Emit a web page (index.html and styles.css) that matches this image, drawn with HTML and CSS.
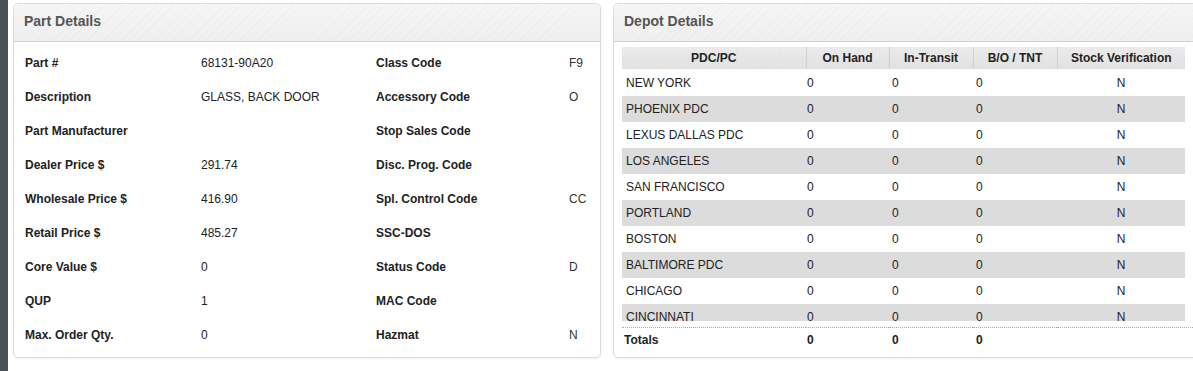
FILE: index.html
```html
<!DOCTYPE html>
<html>
<head>
<meta charset="utf-8">
<link rel="stylesheet" href="styles.css">
</head>
<body>
<div class="page">
  <div class="strip"></div>
  <section class="panel part">
    <div class="panel-head">Part Details</div>
    <div class="part-grid">
      <div class="lbl">Part #</div><div class="val">68131-90A20</div><div class="lbl">Class Code</div><div class="val r">F9</div>
      <div class="lbl">Description</div><div class="val">GLASS, BACK DOOR</div><div class="lbl">Accessory Code</div><div class="val r">O</div>
      <div class="lbl">Part Manufacturer</div><div class="val"></div><div class="lbl">Stop Sales Code</div><div class="val r"></div>
      <div class="lbl">Dealer Price $</div><div class="val">291.74</div><div class="lbl">Disc. Prog. Code</div><div class="val r"></div>
      <div class="lbl">Wholesale Price $</div><div class="val">416.90</div><div class="lbl">Spl. Control Code</div><div class="val r">CC</div>
      <div class="lbl">Retail Price $</div><div class="val">485.27</div><div class="lbl">SSC-DOS</div><div class="val r"></div>
      <div class="lbl">Core Value $</div><div class="val">0</div><div class="lbl">Status Code</div><div class="val r">D</div>
      <div class="lbl">QUP</div><div class="val">1</div><div class="lbl">MAC Code</div><div class="val r"></div>
      <div class="lbl">Max. Order Qty.</div><div class="val">0</div><div class="lbl">Hazmat</div><div class="val r">N</div>
    </div>
  </section>
  <section class="panel depot">
    <div class="panel-head">Depot Details</div>
    <div class="depot-body">
      <table class="dt head">
        <colgroup><col class="c1"><col class="c2"><col class="c3"><col class="c4"><col class="c5"></colgroup>
        <tr><th>PDC/PC</th><th>On Hand</th><th>In-Transit</th><th>B/O / TNT</th><th>Stock Verification</th></tr>
      </table>
      <div class="scroll">
        <table class="dt rows">
          <colgroup><col class="c1"><col class="c2"><col class="c3"><col class="c4"><col class="c5"></colgroup>
          <tr><td>NEW YORK</td><td>0</td><td>0</td><td>0</td><td class="ctr">N</td></tr>
          <tr><td>PHOENIX PDC</td><td>0</td><td>0</td><td>0</td><td class="ctr">N</td></tr>
          <tr><td>LEXUS DALLAS PDC</td><td>0</td><td>0</td><td>0</td><td class="ctr">N</td></tr>
          <tr><td>LOS ANGELES</td><td>0</td><td>0</td><td>0</td><td class="ctr">N</td></tr>
          <tr><td>SAN FRANCISCO</td><td>0</td><td>0</td><td>0</td><td class="ctr">N</td></tr>
          <tr><td>PORTLAND</td><td>0</td><td>0</td><td>0</td><td class="ctr">N</td></tr>
          <tr><td>BOSTON</td><td>0</td><td>0</td><td>0</td><td class="ctr">N</td></tr>
          <tr><td>BALTIMORE PDC</td><td>0</td><td>0</td><td>0</td><td class="ctr">N</td></tr>
          <tr><td>CHICAGO</td><td>0</td><td>0</td><td>0</td><td class="ctr">N</td></tr>
          <tr><td>CINCINNATI</td><td>0</td><td>0</td><td>0</td><td class="ctr">N</td></tr>
        </table>
      </div>
      <table class="dt totals">
        <colgroup><col class="t1"><col class="c2"><col class="c3"><col class="c4"><col class="t5"></colgroup>
        <tr><td>Totals</td><td>0</td><td>0</td><td>0</td><td></td></tr>
      </table>
    </div>
  </section>
</div>
</body>
</html>
```

FILE: styles.css
```css
html, body {
  margin: 0;
  padding: 0;
  background: #fff;
  overflow: hidden;
}
body {
  font-family: "Liberation Sans", Arial, sans-serif;
  font-size: 12px;
  color: #222;
  width: 1193px;
  height: 371px;
}
.page {
  display: flex;
  align-items: flex-start;
  height: 371px;
}
.strip {
  flex: 0 0 8px;
  height: 371px;
  background: #4c5157;
  margin-right: 5px;
}
.panel {
  border: 1px solid #dcdcdc;
  border-radius: 5px;
  margin-top: 3px;
  background: #fff;
  box-shadow: 0 1px 2px rgba(0,0,0,0.06);
  flex-shrink: 0;
}
.part {
  width: 586px;
  height: 353px;
  margin-right: 12px;
}
.depot {
  width: 600px;
  height: 353px;
}
.panel-head {
  height: 37px;
  line-height: 35px;
  border-bottom: 1px solid #d2d2d2;
  border-radius: 5px 5px 0 0;
  padding-left: 10px;
  font-size: 14px;
  font-weight: bold;
  color: #555;
  background:
    repeating-linear-gradient(135deg, rgba(255,255,255,0) 0 5px, rgba(0,0,0,0.018) 5px 6px),
    linear-gradient(#f6f6f6, #efefef);
}
.part-grid {
  display: grid;
  grid-template-columns: 176px 175px 193px 1fr;
  grid-auto-rows: 34px;
  padding: 4px 10px 0 11px;
  align-items: center;
}
.lbl {
  font-weight: bold;
  color: #222;
}
.val {
  color: #222;
}
.val.r {
  color: #333;
}
.depot-body {
  padding: 5px 0 0 8px;
}
.dt {
  border-collapse: collapse;
  table-layout: fixed;
}
.dt.head, .dt.rows {
  width: 563px;
}
.c1 { width: 184px; }
.c2 { width: 83px; }
.c3 { width: 84px; }
.c4 { width: 84px; }
.c5 { width: 128px; }
.t1 { width: 184px; }
.t5 { width: 136px; }
.dt.head th {
  height: 22px;
  padding: 0;
  font-weight: bold;
  color: #222;
  text-align: center;
  border-left: 1px solid #d0d0d0;
  background:
    repeating-linear-gradient(90deg, rgba(0,0,0,0.015) 0 1px, rgba(0,0,0,0) 1px 3px),
    linear-gradient(#ececec, #e2e2e2);
}
.dt.head th:first-child {
  border-left: none;
}
.scroll {
  height: 251px;
  overflow: hidden;
  margin-top: 1px;
}
.dt.rows td {
  height: 26px;
  padding: 0 0 0 1px;
  color: #222;
  white-space: nowrap;
}
.dt.rows td:nth-child(3),
.dt.rows td:nth-child(4),
.dt.totals td:nth-child(3),
.dt.totals td:nth-child(4) {
  padding-left: 3px;
}
.dt.rows tr:nth-child(even) td {
  background: #dcdcdc;
}
.dt.rows td:first-child {
  padding-left: 4px;
}
.dt.rows td.ctr {
  text-align: center;
  padding-left: 0;
}
.dt.totals {
  width: 571px;
  margin-top: 6px;
  border-top: 1px dotted #aaa;
}
.dt.totals td {
  height: 24px;
  padding: 0 0 0 1px;
  font-weight: bold;
  color: #222;
}
.dt.totals td:first-child {
  padding-left: 2px;
}
```
